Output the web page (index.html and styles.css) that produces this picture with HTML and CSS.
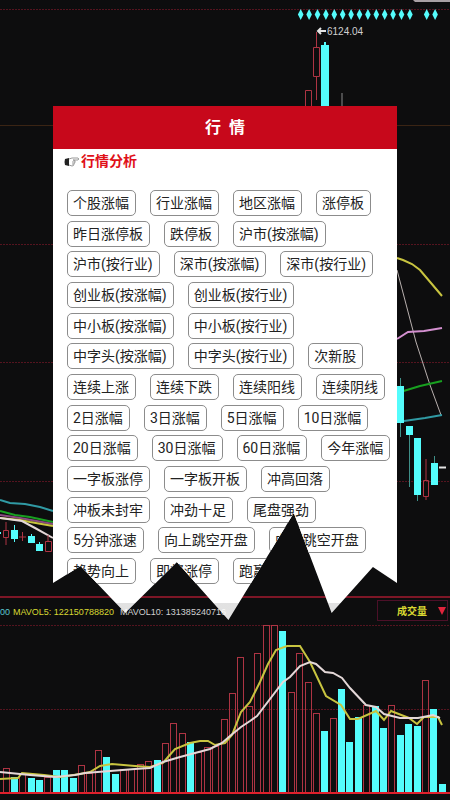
FILE: index.html
```html
<!DOCTYPE html>
<html lang="zh-CN">
<head>
  <meta charset="UTF-8">
  <meta name="viewport" content="width=device-width, initial-scale=1">
  <title>行情</title>
  <link rel="stylesheet" href="styles.css">
</head>
<body>

  <svg class="chart" viewBox="0 0 450 800" preserveAspectRatio="xMidYMin slice" aria-hidden="true">
    <!-- grid -->
    <path class="grid" d="M0 9.5H450M0 244.5H450M0 362.5H450M0 481.5H450M0 625.5H450M0 709.5H450"/>
    <path class="grid-brown" d="M0 125.5H450"/>
    <path class="divider" d="M0 597H450"/>
    <path class="corner" d="M413 0H450V2H415Z"/>

    <!-- top signals and peak -->
    <g id="signals" class="down"></g>
    <path class="up" d="M316.5 32V47M313.5 47.5H319.5V76.5H313.5ZM316.5 77V100M305.5 106V90.5H311.5V106"/>
    <path class="down" d="M321 45H324V42H326V45H329V106H321Z"/>
    <path class="wick" d="M342 93V106"/>
    <path class="arrow" d="M326 31H318M321 28L318 31L321 34"/>
    <text class="label peak" x="327" y="35">6124.04</text>

    <!-- left candles -->
    <path class="line teal" d="M0 500L10 503L25 504L40 507L53 511"/>
    <path class="line green" d="M0 511L15 515L30 517L53 522"/>
    <path class="line purple" d="M0 515L20 518L53 524"/>
    <path class="line yellow" d="M0 518L20 520L30 522L53 526"/>
    <path class="line white" d="M0 518L22 521L35 528L53 538"/>
    <path class="up" d="M6 522V530M3.5 530.5H8.5V537.5H3.5ZM6 538V545M22.5 532V541M19 537H26M45.5 541.5H51.5V551.5H45.5ZM48 535V541"/>
    <path class="down" d="M0 532H1V534H0ZM11 530H14V525H15V530H18V539H15V542H14V539H11ZM28 536H31V534H32V536H35V543H28ZM36 544H39V542H40V544H43V551H36Z"/>

    <!-- right candles -->
    <path class="line yellow" d="M397 258L403 260L412 264L420 270L431 283L442 296"/>
    <path class="line pale" d="M397 270L416 342L430 385L441 415"/>
    <path class="line pink" d="M397 339L408 332L424 331L442 328"/>
    <path class="line green" d="M397 393L420 386L442 381"/>
    <path class="line teal" d="M404 421L425 418L442 415"/>
    <path class="wick-teal" d="M400.5 378V437M409.5 435V487M417.5 495V501M434.5 456V463"/>
    <path class="down" d="M397 386H404V423H397ZM406 426H413V435H406ZM414 438H421V495H414ZM431 463H438V485H431Z"/>
    <path class="up" d="M426 459V480M423.5 480.5H428.5V496.5H423.5ZM426 497V500"/>
    <path class="arrow" d="M439 467.5H446"/>

    <!-- volume header -->
    <text class="label cyan" x="0" y="615">00</text>
    <text class="label gold" x="13" y="615">MAVOL5: 122150788820</text>
    <text class="label" x="120" y="615">MAVOL10: 131385240716</text>
    <rect class="switch" x="377.5" y="600.5" width="70" height="20"/>
    <text class="label gold volume" x="397" y="615">成交量</text>
    <path class="switch-arrow" d="M438 607H446L442 615Z"/>

    <!-- volume bars -->
    <g id="bars"></g>
    <path class="base" d="M0 793H450"/>
    <path class="line yellow" d="M0 779L18 778L22 773L44 775L60 777L80 774L90 772L100 766L112 764L135 766L150 767L163 763L168 757L175 749L190 743L200 741L208 741L215 745L225 743L232 735L241 712L250 702L260 682L268 664L276 650L287 646L300 646L310 662L326 696L341 705L350 719L358 719L376 711L384 720L391 711L409 718L417 724L424 717L438 717L442 725"/>
    <path class="line white" d="M0 772L30 775L55 777L75 775L85 773L110 771L135 769L150 768L163 762L180 757L195 753L210 749L222 743L230 736L241 727L250 721L257 716L283 682L290 677L300 666L310 662L316 664L325 672L333 673L342 678L350 688L366 705L376 707L384 714L400 718L418 718L433 715L440 718"/>
  </svg>

  <main class="card">
    <header class="card-header">
      <h1>行&nbsp;&nbsp;情</h1>
    </header>

    <h2 class="section-title">
      <svg class="hand" viewBox="0 0 16 12" aria-hidden="true">
        <path class="cuff" d="M1 3Q0 6 1 9L5 10V2Z"/>
        <path class="fingers" d="M5 3L8 2H14Q15.500 3 14 4H9M9 4Q12 4 11 6H8M11 6Q11 8 9 8H8M10 8Q10 10 8 10L5 9"/>
      </svg>
      行情分析
    </h2>

    <div class="tags">
      <button class="tag">个股涨幅</button>
      <button class="tag">行业涨幅</button>
      <button class="tag">地区涨幅</button>
      <button class="tag">涨停板</button>
      <button class="tag">昨日涨停板</button>
      <button class="tag">跌停板</button>
      <button class="tag">沪市(按涨幅)</button>
      <button class="tag">沪市(按行业)</button>
      <button class="tag">深市(按涨幅)</button>
      <button class="tag">深市(按行业)</button>
      <button class="tag">创业板(按涨幅)</button>
      <button class="tag">创业板(按行业)</button>
      <button class="tag">中小板(按涨幅)</button>
      <button class="tag">中小板(按行业)</button>
      <button class="tag">中字头(按涨幅)</button>
      <button class="tag">中字头(按行业)</button>
      <button class="tag">次新股</button>
      <button class="tag">连续上涨</button>
      <button class="tag">连续下跌</button>
      <button class="tag">连续阳线</button>
      <button class="tag">连续阴线</button>
      <button class="tag">2日涨幅</button>
      <button class="tag">3日涨幅</button>
      <button class="tag">5日涨幅</button>
      <button class="tag">10日涨幅</button>
      <button class="tag">20日涨幅</button>
      <button class="tag">30日涨幅</button>
      <button class="tag">60日涨幅</button>
      <button class="tag">今年涨幅</button>
      <button class="tag">一字板涨停</button>
      <button class="tag">一字板开板</button>
      <button class="tag">冲高回落</button>
      <button class="tag">冲板未封牢</button>
      <button class="tag">冲劲十足</button>
      <button class="tag">尾盘强劲</button>
      <button class="tag">5分钟涨速</button>
      <button class="tag">向上跳空开盘</button>
      <button class="tag">向下跳空开盘</button>
      <button class="tag">趋势向上</button>
      <button class="tag">即将涨停</button>
      <button class="tag">跑赢大盘</button>
    </div>
  </main>

  <script>
    const SVG = 'http://www.w3.org/2000/svg';
    const base = 793;

    // top edge of each volume bar, r = rising, f = falling
    const volumes = 'r768 f777 r773 f778 f780 r777 f770 f770 f778 r765 r773 r750 f757 f774 r769 r769 r764 r761 f760 r743 r723 r733 f742 r752 r747 r746 r719 r693 r657 r706 r653 r625 r625 f631 r692 r653 r682 r713 f731 r718 f689 f742 f717 r705 f706 f728 r705 f735 f724 f726 r680 f709 f784'.split(' ');

    const bars = document.getElementById('bars');
    volumes.forEach((v, i) => {
      const rising = v[0] === 'r';
      const top = Number(v.slice(1));
      const x = Math.round(2.5 + i * 8.39);
      const rect = document.createElementNS(SVG, 'rect');
      rect.setAttribute('class', rising ? 'up' : 'down');
      rect.setAttribute('x', rising ? x + 0.5 : x);
      rect.setAttribute('y', rising ? top + 0.5 : top);
      rect.setAttribute('width', rising ? 6 : 7);
      rect.setAttribute('height', base - top);
      bars.appendChild(rect);
    });

    const signals = document.getElementById('signals');
    for (let i = 0; i < 17; i++) {
      if (i === 14) continue;
      const path = document.createElementNS(SVG, 'path');
      path.setAttribute('d', `M${300.7 + i * 8.4} 9l2.8 5.500l-2.800 5.500l-2.800 -5.500z`);
      signals.appendChild(path);
    }
  </script>

</body>
</html>
```

FILE: styles.css
```css
* {
  box-sizing: border-box;
}

body {
  position: relative;
  margin: 0;
  min-height: 100vh;
  overflow: hidden;
  background: #0d0d0e;
  color: #222;
  font-family: Roboto, "Noto Sans CJK SC", sans-serif;
}

/* background chart */
.chart {
  position: absolute;
  inset: 0;
  width: 100%;
  height: 100%;
}

.chart path,
.chart rect {
  fill: none;
}

.chart .grid {
  stroke: #55141f;
  stroke-dasharray: 2 1;
}

.chart .grid-brown {
  stroke: #3a2414;
}

.chart .divider {
  stroke: #7d1626;
  stroke-width: 2;
}

.chart .corner {
  fill: #a8a0a4;
}

.chart .up {
  stroke: #ad3443;
}

.chart .down,
.chart .down path {
  fill: #54fcfc;
}

.chart .wick {
  stroke: #8a8a8a;
}

.chart .wick-teal {
  stroke: #3f8f88;
}

.chart .arrow {
  stroke: #e4e4e4;
  stroke-width: 2;
}

.chart .line {
  stroke-width: 2;
}

.chart .yellow { stroke: #c8c440; }
.chart .white { stroke: #e4d8d8; }
.chart .pale { stroke: #b8b0ae; stroke-width: 1; }
.chart .pink { stroke: #d490d0; }
.chart .purple { stroke: #8a4a80; }
.chart .green { stroke: #18a020; }
.chart .teal { stroke: #309aa4; }

.chart .base {
  stroke: #e0202c;
  stroke-width: 2;
}

.chart .switch {
  stroke: #4c1028;
}

.chart .switch-arrow {
  fill: #e0243c;
}

.label {
  fill: #d0d0d0;
  font-family: "Liberation Sans", "Noto Sans CJK SC", sans-serif;
  font-size: 9px;
}

.peak { font-size: 10px; }
.cyan { fill: #5cc8d0; }
.gold { fill: #d8d832; }
.volume { font-size: 10px; font-weight: 700; }

/* card with a torn lower edge */
.card {
  position: relative;
  margin: 106px 53px 0;
  padding-bottom: 36px;
  background: linear-gradient(to top, rgba(255, 255, 255, 0.88) 17px, #fff 17px);
  clip-path: polygon(
    0 0,
    100% 0,
    100% calc(100% - 37px),
    93% calc(100% - 53px),
    81% calc(100% - 7px),
    70% calc(100% - 107px),
    51% 100%,
    36% calc(100% - 58px),
    21% calc(100% - 7px),
    8% calc(100% - 54px),
    0 calc(100% - 37px)
  );
}

.card-header {
  background: #c7081b;
  color: #fff;
  text-align: center;
}

.card-header h1 {
  margin: 0;
  font-size: 16px;
  font-weight: 700;
  line-height: 43px;
}

.section-title {
  display: flex;
  align-items: center;
  gap: 1px;
  margin: 0;
  padding-left: 11px;
  color: #e01018;
  font-size: 14px;
  font-weight: 700;
  line-height: 25px;
}

.hand {
  width: 16px;
  height: 12px;
}

.hand .cuff {
  fill: #222;
}

.hand .fingers {
  fill: none;
  stroke: #999;
}

.tags {
  display: flex;
  flex-wrap: wrap;
  align-content: space-between;
  column-gap: 14px;
  min-height: 394px;
  margin-top: 16px;
  padding-left: 14px;
}

.tag {
  height: 26px;
  padding: 0 6px 0 5px;
  border: 1px solid #8c8c8c;
  border-radius: 5px;
  background: #fff;
  color: #222;
  font-family: inherit;
  font-size: 14px;
  line-height: 24px;
  cursor: pointer;
}
```
